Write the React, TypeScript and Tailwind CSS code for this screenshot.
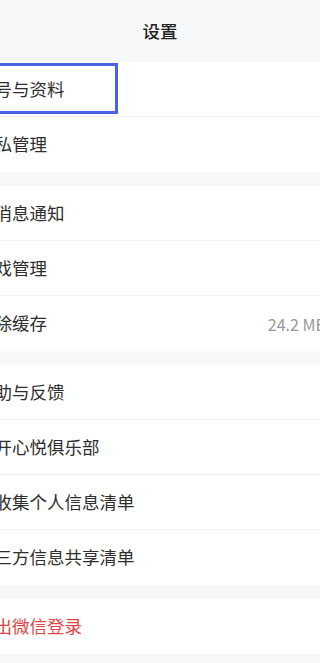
import React from 'react';

type Row = { label: string; value?: string; danger?: boolean; focused?: boolean };

const sections: Row[][] = [
  [{ label: '账号与资料', focused: true }, { label: '隐私管理' }],
  [{ label: '新消息通知' }, { label: '游戏管理' }, { label: '清除缓存', value: '24.2 MB' }],
  [
    { label: '帮助与反馈' },
    { label: '去开心悦俱乐部' },
    { label: '已收集个人信息清单' },
    { label: '第三方信息共享清单' },
  ],
  [{ label: '退出微信登录', danger: true }],
];

const SettingRow: React.FC<{ row: Row; last: boolean }> = ({ row, last }) => (
  <div className={`relative bg-white ${last ? 'h-[55px]' : 'h-[55px] border-b border-[#f0f0f2]'}`}>
    <div className="flex items-center justify-between h-full px-4">
      <span className={`text-[17.5px] ${row.danger ? 'text-[#e04545]' : 'text-[#2e2e2e]'}`}>{row.label}</span>
      {row.value && <span className="text-[16px] text-[#999999] mr-[17px]">{row.value}</span>}
    </div>
    {row.focused && (
      <div className="absolute left-0 top-[1px] h-[51px] w-[157px] border-[3px] border-[#4a62e2]" />
    )}
  </div>
);

export default function App() {
  return (
    <div
      className="w-[320px] h-[663px] overflow-hidden bg-[#f7f8fa]"
      style={{ fontFamily: '"Noto Sans CJK SC", "Noto Sans", sans-serif' }}
    >
      <header className="h-[62px] flex items-center justify-center">
        <h1 className="text-[17.5px] font-medium text-[#222222]">设置</h1>
      </header>
      <div className="ml-[-39px] w-[398px] flex flex-col gap-[14px]">
        {sections.map((rows, i) => (
          <div key={i} className="flex flex-col">
            {rows.map((row, j) => (
              <SettingRow key={row.label} row={row} last={j === rows.length - 1} />
            ))}
          </div>
        ))}
      </div>
    </div>
  );
}
